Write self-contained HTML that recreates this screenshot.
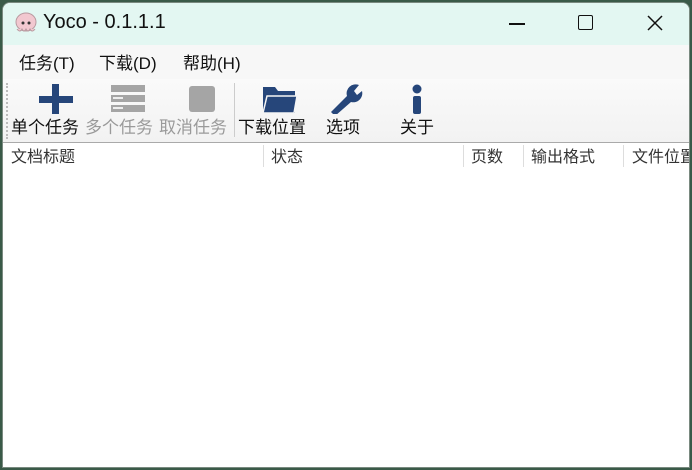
<!DOCTYPE html>
<html><head><meta charset="utf-8"><style>
*{margin:0;padding:0;box-sizing:border-box}
body{width:692px;height:470px;background:#3a5a48;position:relative;overflow:hidden;font-family:"Liberation Sans","Noto Sans CJK SC",sans-serif}
.win{position:absolute;left:2px;top:2px;width:688px;height:466px;background:#fff;border-radius:8px 8px 0 0;overflow:hidden;border:1px solid #7a8a80}
.title{height:42px;background:#e3f7f2;position:relative}
.title .t{position:absolute;left:40px;top:8px;font-size:20px;color:#111}
.menu{height:34px;background:#f7f7f7;font-size:17px;color:#111}
.menu span{position:absolute;top:46px}
.tb{height:64px;background:linear-gradient(#fafafa,#f2f2f2);border-bottom:1px solid #aaa;position:relative}
.lab{position:absolute;top:34px;font-size:17px;color:#111}
.g{color:#9a9a9a}
.hdr{position:relative;height:26px;font-size:16px;color:#333}
.hdr span{position:absolute;top:0px}
.sep{position:absolute;top:2px;width:1px;height:22px;background:#ddd}
</style></head><body>
<div class="win">
<div class="title">
<svg style="position:absolute;left:11px;top:8px" width="24" height="24"><ellipse cx="12" cy="11" rx="10" ry="9" fill="#f2c8d0" stroke="#b89aa0"/><circle cx="9" cy="12" r="1.5" fill="#333"/><circle cx="15" cy="12" r="1.5" fill="#333"/><path d="M3 18 q3 4 5 0 q2 4 4 0 q2 4 4 0 q2 4 5 0" fill="#f2c8d0" stroke="#b89aa0"/></svg>
<div class="t">Yoco - 0.1.1.1</div>
<div style="position:absolute;left:506px;top:20px;width:16px;height:1.5px;background:#111"></div>
<div style="position:absolute;left:575px;top:12px;width:15px;height:15px;border:1.5px solid #111;border-radius:2px"></div>
<svg style="position:absolute;left:644px;top:12px" width="16" height="16"><path d="M1 1L15 15M15 1L1 15" stroke="#111" stroke-width="1.5"/></svg>
</div>
<div class="menu"><span style="left:16px">任务(T)</span><span style="left:96px">下载(D)</span><span style="left:180px">帮助(H)</span></div>
<div class="tb">
<div style="position:absolute;left:3px;top:4px;height:56px;border-left:2px dotted #bbb"></div>
<svg style="position:absolute;left:34px;top:4px" width="38" height="32"><rect x="15" y="1" width="7" height="30" fill="#26467a"/><rect x="2" y="13" width="34" height="7" fill="#26467a"/></svg>
<svg style="position:absolute;left:106px;top:6px" width="38" height="30"><rect x="2" y="0" width="34" height="7" fill="#a5a5a5"/><rect x="2" y="10" width="34" height="7" fill="#a5a5a5"/><rect x="2" y="20" width="34" height="7" fill="#a5a5a5"/><rect x="4" y="12" width="10" height="2" fill="#eee"/><rect x="4" y="22" width="10" height="2" fill="#eee"/></svg>
<div style="position:absolute;left:186px;top:7px;width:26px;height:26px;background:#a5a5a5;border-radius:3px"></div>
<div style="position:absolute;left:231px;top:4px;width:1px;height:54px;background:#ccc"></div>
<svg style="position:absolute;left:258px;top:5px" width="38" height="30"><path d="M2 3h12l3 4h17v22H2z" fill="#26467a"/><path d="M6 12h30l-3 17H2z" fill="#26467a" stroke="#f5f5f5" stroke-width="1.5"/></svg>
<svg style="position:absolute;left:324px;top:3px" width="38" height="32"><path d="M4 30 L20 14 A9 9 0 0 1 32 3 L27 9 L30 13 L35 9 A9 9 0 0 1 24 20 L8 34 Z" fill="#26467a"/></svg>
<svg style="position:absolute;left:407px;top:4px" width="14" height="32"><circle cx="7" cy="6" r="4.5" fill="#26467a"/><rect x="3" y="13" width="8" height="18" rx="2" fill="#26467a"/></svg>
<span class="lab" style="left:8px">单个任务</span>
<span class="lab g" style="left:82px">多个任务</span>
<span class="lab g" style="left:156px">取消任务</span>
<span class="lab" style="left:235px">下载位置</span>
<span class="lab" style="left:323px">选项</span>
<span class="lab" style="left:397px">关于</span>
</div>
<div class="hdr">
<span style="left:8px">文档标题</span><div class="sep" style="left:260px"></div>
<span style="left:268px">状态</span><div class="sep" style="left:460px"></div>
<span style="left:468px">页数</span><div class="sep" style="left:520px"></div>
<span style="left:528px">输出格式</span><div class="sep" style="left:620px"></div>
<span style="left:629px;white-space:nowrap">文件位置</span>
</div>
</div>
</body></html>
